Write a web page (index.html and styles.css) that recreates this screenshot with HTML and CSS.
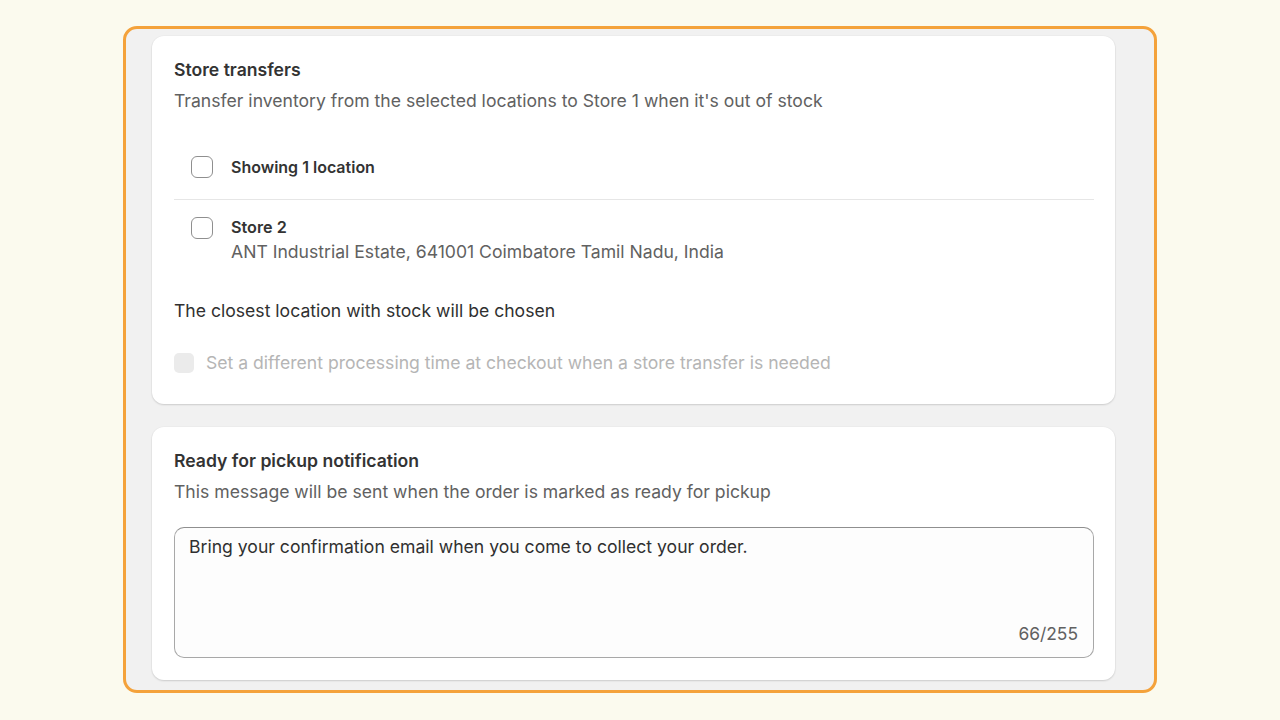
FILE: index.html
```html
<!DOCTYPE html>
<html lang="en">
<head>
<meta charset="utf-8">
<title>Store transfers</title>
<link rel="stylesheet" href="styles.css">
</head>
<body>
<div class="frame">
  <section class="card card-transfers">
    <h2 class="card-title">Store transfers</h2>
    <p class="card-desc">Transfer inventory from the selected locations to Store 1 when it's out of stock</p>
    <div class="loc-list">
      <div class="loc-row loc-head">
        <span class="checkbox"></span>
        <span class="loc-head-label">Showing 1 location</span>
      </div>
      <div class="loc-row loc-item">
        <span class="checkbox checkbox-item"></span>
        <div class="loc-text">
          <div class="loc-name">Store 2</div>
          <div class="loc-addr">ANT Industrial Estate, 641001 Coimbatore Tamil Nadu, India</div>
        </div>
      </div>
    </div>
    <p class="closest">The closest location with stock will be chosen</p>
    <div class="disabled-row">
      <span class="checkbox-disabled"></span>
      <span class="disabled-label">Set a different processing time at checkout when a store transfer is needed</span>
    </div>
  </section>
  <section class="card card-pickup">
    <h2 class="card-title">Ready for pickup notification</h2>
    <p class="card-desc">This message will be sent when the order is marked as ready for pickup</p>
    <div class="textarea">
      <div class="textarea-text">Bring your confirmation email when you come to collect your order.</div>
      <div class="counter">66/255</div>
    </div>
  </section>
</div>
</body>
</html>
```
FILE: styles.css
```css
* { box-sizing: border-box; }
html, body { margin: 0; padding: 0; }
body {
  background: #fbfaee;
  font-family: Inter, "Noto Sans", sans-serif;
  color: #303030;
  width: 1280px;
  height: 720px;
  overflow: hidden;
}
.frame {
  margin: 26px 0 0 123px;
  width: 1034px;
  height: 667px;
  border: 3px solid #f4a23b;
  border-radius: 14px;
  background: #f1f1f1;
  padding: 7px 39px 0 26px;
  display: flex;
  flex-direction: column;
  gap: 23px;
}
.card {
  background: #ffffff;
  border-radius: 12px;
  box-shadow: 0 1px 2px rgba(0,0,0,0.14), 0 0 0 1px rgba(0,0,0,0.015);
  padding: 22px 21px 0 22px;
}
.card-transfers { height: 368px; }
.card-pickup { height: 253px; }
.card-title {
  margin: 0;
  font-size: 17.6px;
  line-height: 24px;
  font-weight: 600;
  color: #333333;
}
.card-desc {
  margin: 7px 0 0;
  font-size: 17.6px;
  line-height: 24px;
  color: #616161;
}
.loc-list { margin-top: 30px; }
.loc-row {
  display: flex;
  align-items: flex-start;
  padding-left: 17px;
}
.loc-head {
  padding-top: 12px;
  padding-bottom: 20px;
  border-bottom: 1px solid #e6e6e6;
  align-items: center;
}
.checkbox {
  width: 22px;
  height: 22px;
  border: 1.5px solid #8f8f8f;
  border-radius: 6px;
  background: #fff;
  flex-shrink: 0;
}
.loc-head-label {
  margin-left: 18px;
  font-size: 16px;
  line-height: 24px;
  font-weight: 600;
  color: #333333;
}
.loc-item { padding-top: 15px; }
.checkbox-item { margin-top: 2px; }
.loc-text { margin-left: 18px; }
.loc-name {
  font-size: 16.2px;
  line-height: 24px;
  font-weight: 600;
  color: #333333;
}
.loc-addr {
  font-size: 17.6px;
  line-height: 25px;
  color: #616161;
}
.closest {
  margin: 35px 0 0;
  font-size: 17.6px;
  line-height: 24px;
  color: #303030;
}
.disabled-row {
  margin-top: 28px;
  display: flex;
  align-items: center;
}
.checkbox-disabled {
  width: 20px;
  height: 20px;
  border-radius: 5px;
  background: #ebebeb;
  flex-shrink: 0;
}
.disabled-label {
  margin-left: 12px;
  font-size: 17.6px;
  line-height: 24px;
  color: #b5b5b5;
}
.textarea {
  margin-top: 23px;
  height: 131px;
  border: 1px solid #a8a8a8;
  border-top-color: #8f8f8f;
  border-radius: 10px;
  background: #fdfdfd;
  padding: 7px 15px 11px 14px;
  display: flex;
  flex-direction: column;
  justify-content: space-between;
}
.textarea-text {
  font-size: 17.6px;
  line-height: 24px;
  color: #303030;
}
.counter {
  align-self: flex-end;
  font-size: 17.4px;
  line-height: 24px;
  color: #616161;
}
```
